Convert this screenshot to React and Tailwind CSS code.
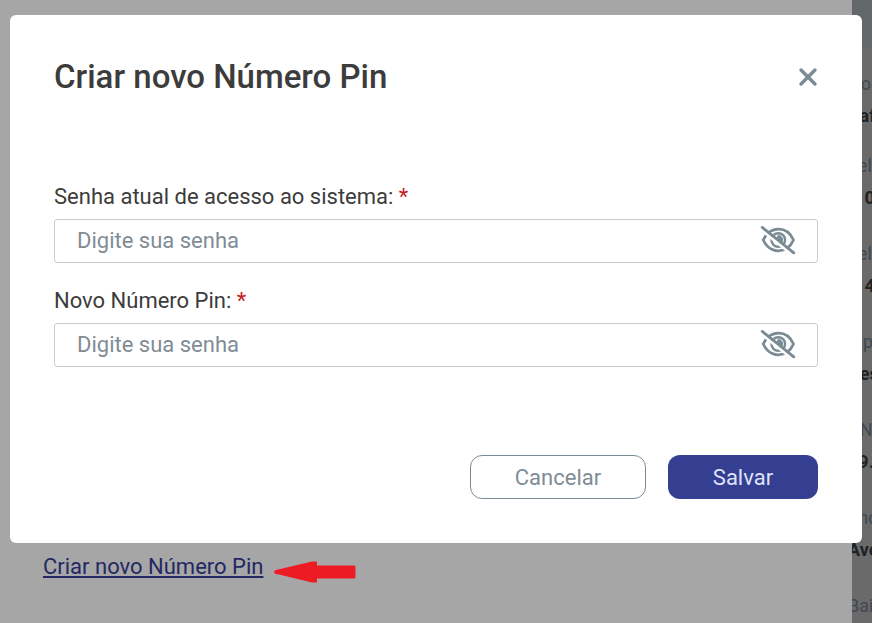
import React, { useState } from "react";

const details = [
  { label: "Nome", value: "Rafael" },
  { label: "Telefone", value: "(10" },
  { label: "Telefone", value: "(14" },
  { label: "Tipo", value: "Desenv" },
  { label: "CNPJ", value: "29.1" },
  { label: "Endereço", value: "Avenida" },
  { label: "Bairro", value: "Centro" },
];

const EyeOffIcon = () => (
  <svg
    viewBox="0 0 36 30"
    className="h-[30px] w-9"
    fill="none"
    stroke="#7b8b95"
    strokeLinecap="round"
    aria-hidden="true"
  >
    <path
      d="M3.2 14C6.5 7.3 12 3.2 18.5 3.2S30.5 7.3 33.5 14C30.5 20.7 25 24.8 18.5 24.8S6.5 20.7 3.2 14Z"
      strokeWidth="2.8"
      strokeLinejoin="round"
    />
    <circle cx="18.3" cy="14" r="6.8" strokeWidth="2.4" />
    <path
      d="M17.4 9.2A4.8 4.8 0 0 1 21.6 17.4L14.6 12.2A2.6 2.6 0 0 0 17.4 9.2Z"
      fill="#7b8b95"
      stroke="none"
    />
    <path d="M1.5 4L32 28.6" stroke="#fff" strokeWidth="2.8" strokeLinecap="butt" />
    <path d="M2.2 1.4L33.8 26.8" strokeWidth="2.8" />
  </svg>
);

const CloseIcon = () => (
  <svg viewBox="0 0 20 20" className="size-5" fill="none" aria-hidden="true">
    <path
      d="M3 3L17 17M17 3L3 17"
      stroke="#7b8b95"
      strokeWidth="3.4"
      strokeLinecap="round"
    />
  </svg>
);

const PasswordField = ({ id, label, value, onChange }) => {
  const [visible, setVisible] = useState(false);

  return (
    <div>
      <label htmlFor={id} className="block text-[22px] leading-8 text-[#3c3c3c]">
        {label} <span className="text-[#c9211e]">*</span>
      </label>
      <div className="mt-1.5 flex h-11 items-center rounded-[3px] border border-[#c8cfd3] pr-[21px] pl-[22px]">
        <input
          id={id}
          type={visible ? "text" : "password"}
          placeholder="Digite sua senha"
          value={value}
          onChange={(e) => onChange(e.target.value)}
          className="min-w-0 flex-1 bg-transparent text-[22px] leading-8 text-[#3c3c3c] outline-none placeholder:text-[#7f8c95]"
        />
        <button
          type="button"
          aria-label="Mostrar senha"
          onClick={() => setVisible(!visible)}
        >
          <EyeOffIcon />
        </button>
      </div>
    </div>
  );
};

const App = () => {
  const [open, setOpen] = useState(true);
  const [password, setPassword] = useState("");
  const [pin, setPin] = useState("");

  return (
    <div className="flex h-screen overflow-hidden bg-[#a6a6a6] font-['Roboto',sans-serif]">
      <main className="flex min-w-0 flex-1 items-end pb-10 pl-[43px]">
        <div className="flex items-center gap-[11px]">
          <a
            href="#pin"
            onClick={() => setOpen(true)}
            className="text-[22px] leading-8 text-[#232863] underline"
          >
            Criar novo Número Pin
          </a>
          <svg viewBox="0 0 82 22" className="mt-2.5 h-[22px] w-[82px]" aria-hidden="true">
            <path
              d="M0 11Q0 9 5 8.2L38 .5H43V4.5H80.5L81.5 5.5V16.5L80.5 17.5H43V21.5H38L5 13.6Q0 13 0 11Z"
              fill="#ed1c24"
            />
          </svg>
        </div>
      </main>

      <aside className="w-5 shrink-0 overflow-hidden bg-[#6a6a6a]">
        <div className="h-12 bg-[#62676a]" />
        <dl className="-ml-1 pt-5 text-lg leading-8 whitespace-nowrap">
          {details.map((item, i) => (
            <div key={i} className="mb-6 first:mb-[18px]">
              <dt className="text-[#414850]">{item.label}</dt>
              <dd className="font-bold text-[#202325]">{item.value}</dd>
            </div>
          ))}
        </dl>
      </aside>

      {/* Modal */}
      {open && (
        <div
          role="dialog"
          aria-modal="true"
          aria-labelledby="pin-title"
          className="fixed inset-x-[10px] top-[15px] rounded-md bg-white px-11 pt-10 pb-11"
        >
          <div className="flex items-center justify-between">
            <h1
              id="pin-title"
              className="text-[33px] leading-[44px] font-medium text-[#3c3c3c]"
            >
              Criar novo Número Pin
            </h1>
            <button type="button" aria-label="Fechar" onClick={() => setOpen(false)}>
              <CloseIcon />
            </button>
          </div>

          <form onSubmit={(e) => e.preventDefault()}>
            <div className="mt-[82px] flex flex-col gap-[22px]">
              <PasswordField
                id="password"
                label="Senha atual de acesso ao sistema:"
                value={password}
                onChange={setPassword}
              />
              <PasswordField
                id="pin"
                label="Novo Número Pin:"
                value={pin}
                onChange={setPin}
              />
            </div>

            <div className="mt-[88px] flex justify-end gap-[22px]">
              <button
                type="button"
                onClick={() => setOpen(false)}
                className="h-11 w-44 rounded-xl border border-[#7b8b95] text-[22px] text-[#7f8c95]"
              >
                Cancelar
              </button>
              <button
                type="submit"
                className="h-11 w-[150px] rounded-xl bg-[#343f92] text-[22px] text-[#dfe2fa]"
              >
                Salvar
              </button>
            </div>
          </form>
        </div>
      )}
    </div>
  );
};

export default App;
